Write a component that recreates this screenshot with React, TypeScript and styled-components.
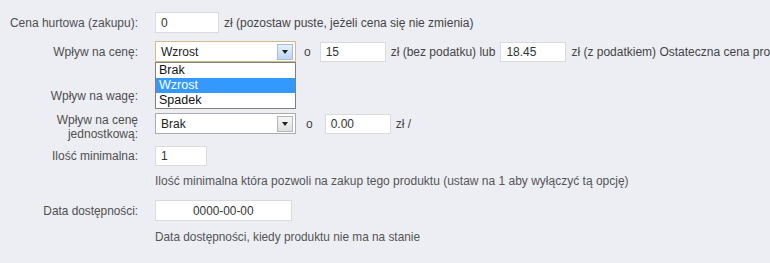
import React from "react";
import styled, { createGlobalStyle } from "styled-components";

const Global = createGlobalStyle`
  html, body { margin: 0; padding: 0; background: #eceef4; }
  body { font-family: "Liberation Sans", Arial, sans-serif; font-size: 12px; color: #333; }
  * { box-sizing: border-box; }
`;

const Page = styled.div`
  width: 770px;
  height: 263px;
  overflow: hidden;
  background: #eceef4;
  padding: 12px 0 0 7px;
  position: relative;
`;

const Row = styled.div<{ $mt?: number; $top?: boolean }>`
  display: grid;
  grid-template-columns: 131px max-content;
  column-gap: 17px;
  align-items: ${(p) => (p.$top ? "start" : "center")};
  margin-top: ${(p) => p.$mt ?? 0}px;
  white-space: nowrap;
`;

const Label = styled.div<{ $wrap?: boolean }>`
  text-align: right;
  color: #4f4f4f;
  line-height: 14px;
  white-space: ${(p) => (p.$wrap ? "normal" : "nowrap")};
  padding-left: ${(p) => (p.$wrap ? "28px" : "0")};
`;

const Field = styled.div`
  display: flex;
  align-items: center;
  gap: 5px;
  color: #444;
  position: relative;
`;

const Input = styled.div<{ $w: number; $center?: boolean; $h?: number }>`
  width: ${(p) => p.$w}px;
  height: ${(p) => p.$h ?? 21}px;
  background: #fff;
  border: 1px solid #d9dadd;
  padding: 0 5px;
  display: flex;
  align-items: center;
  justify-content: ${(p) => (p.$center ? "center" : "flex-start")};
  color: #333;
  font-size: 12px;
`;

const Select = styled.div<{ $focus?: boolean }>`
  width: 141px;
  height: 21px;
  background: #fff;
  border: 1px solid ${(p) => (p.$focus ? "#d2bd80" : "#a9adb3")};
  display: flex;
  align-items: center;
  padding: 0 2px 0 5px;
  position: relative;
`;

const Placeholder = styled.div`
  width: 141px;
  height: 21px;
`;

const SelectText = styled.span`
  flex: 1;
  color: #222;
`;

const ArrowBtn = styled.div<{ $focus?: boolean }>`
  width: 16px;
  height: 16px;
  border: 1px solid ${(p) => (p.$focus ? "#a4bcd8" : "#b5b5b5")};
  background: ${(p) =>
    p.$focus
      ? "linear-gradient(#e6f1fc, #bcd6f3)"
      : "linear-gradient(#f6f6f6, #dedede)"};
  display: flex;
  align-items: center;
  justify-content: center;
`;

const Triangle = styled.div`
  width: 0;
  height: 0;
  border-left: 3.5px solid transparent;
  border-right: 3.5px solid transparent;
  border-top: 4px solid #222;
  margin-top: 1px;
`;

const Small = styled.span<{ $ml?: number; $mr?: number }>`
  margin-left: ${(p) => p.$ml ?? 0}px;
  margin-right: ${(p) => p.$mr ?? 0}px;
`;

const Hint = styled.div<{ $mt: number }>`
  margin-top: ${(p) => p.$mt}px;
  padding-left: 148px;
  color: #555;
  line-height: 14px;
  white-space: nowrap;
`;

const Dropdown = styled.div`
  position: absolute;
  left: 0;
  top: 21px;
  width: 141px;
  background: #fff;
  border: 1px solid #7f7f7f;
  z-index: 5;
`;

const Option = styled.div<{ $active?: boolean }>`
  height: 15px;
  line-height: 15px;
  padding-left: 3px;
  font-size: 12.5px;
  background: ${(p) => (p.$active ? "#3399ff" : "#fff")};
  color: ${(p) => (p.$active ? "#fff" : "#111")};
`;

const Condensed = styled.span`
  display: inline-block;
  font-size: 13px;
  transform: scaleX(0.91);
  transform-origin: left center;
`;

const CondensedRight = styled(Condensed)`
  transform-origin: right center;
`;

const CondensedCenter = styled(Condensed)`
  transform-origin: center center;
`;

function SelectBox({ value, focus }: { value: string; focus?: boolean }) {
  return (
    <Select $focus={focus}>
      <SelectText>{value}</SelectText>
      <ArrowBtn $focus={focus}>
        <Triangle />
      </ArrowBtn>
    </Select>
  );
}

export default function App() {
  return (
    <>
      <Global />
      <Page>
        <Row>
          <Label>Cena hurtowa (zakupu):</Label>
          <Field>
            <Input $w={64}>0</Input>
            <span>zł (pozostaw puste, jeżeli cena się nie zmienia)</span>
          </Field>
        </Row>
        <Row $mt={8}>
          <Label>Wpływ na cenę:</Label>
          <Field>
            <div style={{ position: "relative" }}>
              <SelectBox value="Wzrost" focus />
              <Dropdown>
                <Option>Brak</Option>
                <Option $active>Wzrost</Option>
                <Option>Spadek</Option>
              </Dropdown>
            </div>
            <Small $ml={3} $mr={4}>o</Small>
            <Input $w={66} $h={20}>15</Input>
            <span>zł (bez podatku) lub</span>
            <Input $w={66} $h={20}>18.45</Input>
            <span>zł (z podatkiem) Ostateczna cena produktu</span>
          </Field>
        </Row>
        <Row $mt={23}>
          <Label>Wpływ na wagę:</Label>
          <Field>
            <Placeholder />
          </Field>
        </Row>
        <Row $mt={7} $top>
          <Label $wrap>Wpływ na cenę jednostkową:</Label>
          <Field>
            <SelectBox value="Brak" />
            <Small $ml={5} $mr={7}>o</Small>
            <Input $w={66} $h={20}>0.00</Input>
            <span>zł /</span>
          </Field>
        </Row>
        <Row $mt={5}>
          <Label>Ilość minimalna:</Label>
          <Field>
            <Input $w={52} $h={20}>1</Input>
          </Field>
        </Row>
        <Hint $mt={8}>
          Ilość minimalna która pozwoli na zakup tego produktu (ustaw na 1 aby wyłączyć tą opcję)
        </Hint>
        <Row $mt={12}>
          <Label>
            <CondensedRight>Data dostępności:</CondensedRight>
          </Label>
          <Field>
            <Input $w={137} $center>
              <CondensedCenter>0000-00-00</CondensedCenter>
            </Input>
          </Field>
        </Row>
        <Hint $mt={9}>
          <Condensed>Data dostępności, kiedy produktu nie ma na stanie</Condensed>
        </Hint>
      </Page>
    </>
  );
}
